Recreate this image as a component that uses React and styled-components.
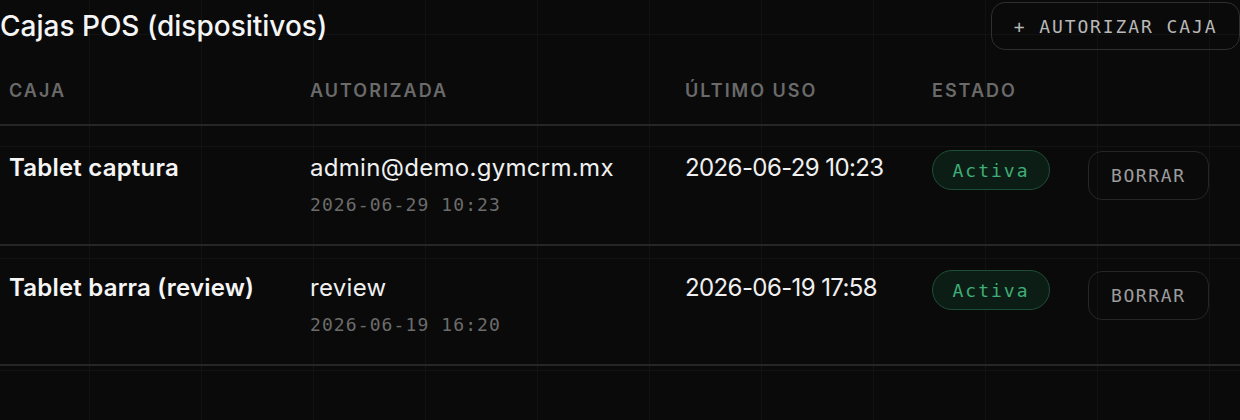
import React from "react";
import styled, { createGlobalStyle } from "styled-components";

const GlobalStyle = createGlobalStyle`
  html, body {
    margin: 0;
    padding: 0;
    background: #0a0a0a;
  }
  * {
    box-sizing: border-box;
  }
`;

const SANS = `"Inter", "Noto Sans", sans-serif`;
const MONO = `"DejaVu Sans Mono", "Liberation Mono", monospace`;

const Page = styled.div`
  width: 1240px;
  height: 420px;
  background-color: #0a0a0a;
  background-image:
    linear-gradient(to right, rgba(255, 255, 255, 0.03) 1px, transparent 1px),
    linear-gradient(to bottom, rgba(255, 255, 255, 0.03) 1px, transparent 1px);
  background-size: 112px 112px;
  background-position: 89px 34px;
  font-family: ${SANS};
  color: #f2f2f2;
  overflow: hidden;
`;

const TopBar = styled.div`
  display: flex;
  justify-content: space-between;
  align-items: center;
  height: 52px;
`;

const Title = styled.h2`
  margin: 0;
  font-size: 28px;
  font-weight: 500;
  color: #f5f5f5;
  letter-spacing: 0;
`;

const OutlineButton = styled.button`
  height: ${(p) => (p.$small ? "49px" : "48px")};
  padding: 0 ${(p) => (p.$small ? "22px" : "21.5px")};
  background: transparent;
  border: 1.5px solid ${(p) => (p.$small ? "#262626" : "#2f2f2f")};
  border-radius: 14px;
  color: ${(p) => (p.$small ? "#9c9c9c" : "#b8b8b8")};
  font-family: ${MONO};
  font-size: 18px;
  letter-spacing: ${(p) => (p.$small ? "1.6px" : "1.9px")};
  text-transform: uppercase;
  cursor: pointer;
  white-space: nowrap;
`;

const Table = styled.div`
  display: grid;
  grid-template-columns: 301px 375px 247px 156px 1fr;
`;

const HeadCell = styled.div`
  height: 74px;
  display: flex;
  align-items: center;
  padding: 4px 0 0 9px;
  border-bottom: 2px solid #262626;
  font-size: 18px;
  font-weight: 600;
  letter-spacing: 2px;
  color: #6a6a6a;
  text-transform: uppercase;
`;

const Cell = styled.div`
  height: 120px;
  padding: ${(p) => (p.$action ? "25px" : "28px")} 0 0 9px;
  border-bottom: 2px solid #262626;
  display: flex;
  flex-direction: column;
  align-items: flex-start;
`;

const Name = styled.div`
  font-size: 24px;
  font-weight: 600;
  color: #f5f5f5;
  line-height: 28px;
  letter-spacing: 0.2px;
`;

const Primary = styled.div`
  font-size: 24px;
  font-weight: 400;
  color: #f0f0f0;
  line-height: 28px;
  letter-spacing: ${(p) => (p.$tight ? "-0.6px" : "0.3px")};
`;

const Meta = styled.div`
  margin-top: 12px;
  font-family: ${MONO};
  font-size: 18px;
  line-height: 22px;
  letter-spacing: 1.1px;
  color: #6c6c6c;
`;

const Badge = styled.span`
  margin-top: -4px;
  display: inline-flex;
  align-items: center;
  height: 40px;
  padding: 0 19.5px;
  border-radius: 999px;
  border: 1.5px solid #1d4f38;
  background: #0c1d15;
  color: #3fae77;
  font-family: ${MONO};
  font-size: 18px;
  letter-spacing: 2px;
`;

const devices = [
  {
    name: "Tablet captura",
    by: "admin@demo.gymcrm.mx",
    at: "2026-06-29 10:23",
    lastUse: "2026-06-29 10:23",
  },
  {
    name: "Tablet barra (review)",
    by: "review",
    at: "2026-06-19 16:20",
    lastUse: "2026-06-19 17:58",
  },
];

export default function App() {
  return (
    <Page>
      <GlobalStyle />
      <TopBar>
        <Title>Cajas POS (dispositivos)</Title>
        <OutlineButton>+ Autorizar caja</OutlineButton>
      </TopBar>
      <Table>
        <HeadCell>Caja</HeadCell>
        <HeadCell>Autorizada</HeadCell>
        <HeadCell>Último uso</HeadCell>
        <HeadCell>Estado</HeadCell>
        <HeadCell />
        {devices.map((d) => (
          <React.Fragment key={d.name}>
            <Cell>
              <Name>{d.name}</Name>
            </Cell>
            <Cell>
              <Primary>{d.by}</Primary>
              <Meta>{d.at}</Meta>
            </Cell>
            <Cell>
              <Primary $tight>{d.lastUse}</Primary>
            </Cell>
            <Cell>
              <Badge>Activa</Badge>
            </Cell>
            <Cell $action>
              <OutlineButton $small>Borrar</OutlineButton>
            </Cell>
          </React.Fragment>
        ))}
      </Table>
    </Page>
  );
}
